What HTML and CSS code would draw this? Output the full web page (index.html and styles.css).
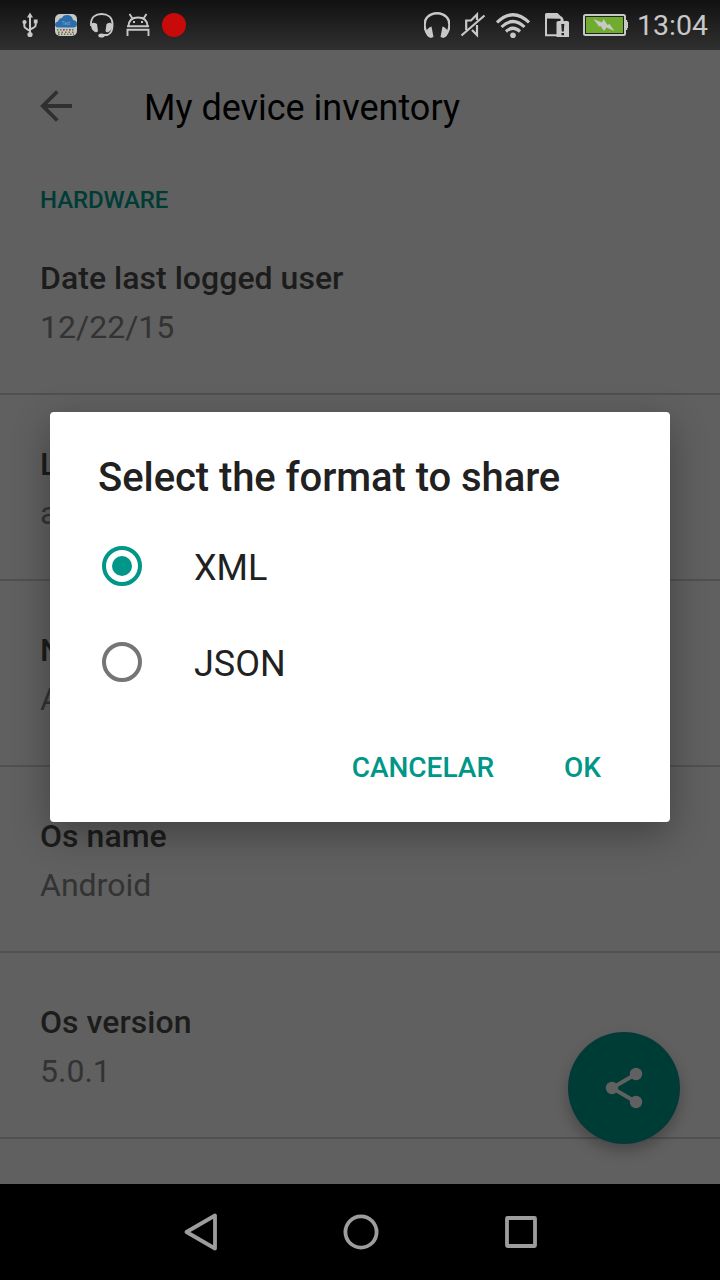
FILE: index.html
```html
<!DOCTYPE html>
<html lang="en">
<head>
<meta charset="utf-8">
<title>My device inventory</title>
<link rel="stylesheet" href="styles.css">
</head>
<body>
<div class="screen">
  <header class="status">
    <div class="status-left">
      <svg width="18" height="26" viewBox="21 12 18 26" fill="none" stroke="#c8c8c8" stroke-width="2"><path d="M30 16V35M24.300 23v3q0 2 2 2.600L30 31M35.700 22v3q0 2-2 2.600L30 29.500"/><path d="M30 12.500l3 5h-6z" fill="#c8c8c8" stroke="none"/><circle cx="30" cy="34.500" r="2.600" fill="#c8c8c8" stroke="none"/><circle cx="24.500" cy="22" r="2.100" fill="#c8c8c8" stroke="none"/><path d="M33.800 19.500h3.800v3.800h-3.800z" fill="#c8c8c8" stroke="none"/></svg>
      <svg class="gap-app" width="22" height="22" viewBox="0 0 22 22"><rect width="22" height="22" rx="5" fill="#c8c8c2"/><path d="M3 13.500Q0 13 0 10.500 0 8 3 7.500 4 4 7 4 8 1 12 1q5 0 6 5 4 .5 4 4 0 3-3 3.500z" fill="#2b6cab"/><text x="11" y="10.500" text-anchor="middle" font-size="4.500" fill="#7ba5cb">Test</text><g fill="none" stroke-width="1.600"><path d="M2 15.800h18" stroke="#3d8a4b" stroke-dasharray="1.500 1.500"/><path d="M3 18.200h17" stroke="#bd4248" stroke-dasharray="1.500 2"/><path d="M3 20.300h16" stroke="#45864c" stroke-dasharray="1.500 1.500"/><path d="M8 15.800h9" stroke="#b9353f" stroke-dasharray="1.500 4.500"/></g></svg>
      <svg class="gap-headset" width="24" height="26" viewBox="90 12 24 26"><path d="M91 26v-2C91 17 95.500 14 101.500 14S112.500 17 112.500 24v2q0 7-5 9H102" fill="none" stroke="#c8c8c8" stroke-width="1.800"/><path d="M91 25q1-3 4-2l2 1 1 7q-1 2-3 1-4-2-4-7zM112.500 25q-1-3-4-2l-2 1-1 7q1 2 3 1 4-2 4-7z" fill="#c8c8c8"/><ellipse cx="101.500" cy="35.500" rx="3.200" ry="2" fill="#c8c8c8"/></svg>
      <svg class="gap-droid" width="24" height="26" viewBox="126 12 24 26" fill="none" stroke="#c8c8c8" stroke-width="1.900"><path d="M127 26.200h22M128.500 26Q129 17.500 138 17.500T147.500 26M132.500 18.500L129.500 14M143.500 18.500l3-4.500M127.500 36v-6.200h21V36"/><path d="M133 21h2v2h-2zM141 21h2v2h-2z" fill="#c8c8c8" stroke="none"/></svg>
      <span class="record"></span>
    </div>
    <div class="status-right">
      <svg width="26" height="26" viewBox="424 12 26 26"><path d="M429 36C423 29 424 21 427 17.500q4-4.200 10-4.200t10 4.200C450 21 451 29 445 36" fill="none" stroke="#c8c8c8" stroke-width="2.400"/><path d="M431.500 26.500l2 10.500-3 1q-5-2-4-7 1-3 5-4.500zM442.500 26.500l-2 10.500 3 1q5-2 4-7-1-3-5-4.500z" fill="#c8c8c8"/></svg>
      <svg class="gap-mute" width="25" height="26" viewBox="461 12 25 26" fill="none" stroke="#c8c8c8" stroke-width="2.200"><path d="M466.200 30v-9.500h4.800L477 14.500V20M477 25v10l-5-5M461.500 35.500l23-20"/></svg>
      <svg class="gap-wifi" width="34" height="26" viewBox="496 12 34 26" fill="none" stroke="#c8c8c8" stroke-width="3.100"><path d="M497 22.500q16-15.500 32 0M501.500 27q11.500-11 23 0M506 31.500q7-6.500 14 0"/><circle cx="513" cy="35.200" r="2.800" fill="#c8c8c8" stroke="none"/></svg>
      <svg class="gap-sim" width="25" height="26" viewBox="544 12 25 26"><path d="M557 35.200H546V17.500h15l1 1v3" fill="none" stroke="#c8c8c8" stroke-width="2"/><path d="M545 18v-3.500q0-1.500 1.500-1.500h11l6 6V22h-3v-3.500z" fill="#c8c8c8"/><path d="M556.500 22l1.500-1h9.500l1.500 1v15h-12.500z" fill="#c8c8c8"/><path d="M561.300 24h3l-.5 7.500h-2zM561.500 33h2.500v2.300h-2.500z" fill="#222"/></svg>
      <svg class="gap-battery" width="45" height="22" viewBox="583 14 45 22"><rect x="584" y="15" width="41" height="20" rx="1.500" fill="#222" stroke="#c8c8c8" stroke-width="2"/><path d="M626 20h1.200v2h.8v6h-.8v2H626z" fill="#c8c8c8"/><path d="M586 17h37v16h-37z" fill="#70ac2d"/><path d="M593.500 19l8.500 3.500 1.500-3.500 4 6 2-1 5 7-8-3.500-2.500 3.500-3.500-5-1.500.5z" fill="#c8c8c8"/></svg>
      <span class="clock">13:04</span>
    </div>
  </header>

  <main class="page">
    <div class="toolbar">
      <svg width="32" height="32" viewBox="0 0 32 32" fill="none" stroke="#303030" stroke-width="3.800"><path d="M32 16H3M17.300 1.500L2.800 16l14.500 14.500"/></svg>
      <h1 class="title">My device inventory</h1>
    </div>
    <h2 class="category">HARDWARE</h2>
    <section class="row"><h3 class="name">Date last logged user</h3><p class="value">12/22/15</p></section>
    <section class="row"><h3 class="name">L</h3><p class="value">a</p></section>
    <section class="row"><h3 class="name">N</h3><p class="value">A</p></section>
    <section class="row"><h3 class="name">Os name</h3><p class="value">Android</p></section>
    <section class="row"><h3 class="name">Os version</h3><p class="value">5.0.1</p></section>
    <button class="fab" aria-label="Share"><svg width="38" height="42" viewBox="0 0 38 42" fill="#616161" stroke="#616161"><path d="M31 7L7 21l24 14" fill="none" stroke-width="3.800"/><g stroke="none"><circle cx="7" cy="21" r="6.200"/><circle cx="31" cy="7" r="6.200"/><circle cx="31" cy="35" r="6.200"/></g></svg></button>
  </main>

  <nav class="nav">
    <svg width="36" height="40" viewBox="0 0 36 40"><path d="M32 3.500v33L3.500 20z"/></svg>
    <svg width="40" height="40" viewBox="0 0 40 40"><circle cx="20" cy="20" r="15.600"/></svg>
    <svg width="36" height="40" viewBox="0 0 36 40"><rect x="4" y="6" width="28" height="28" rx=".5"/></svg>
  </nav>

  <div class="dialog" role="dialog">
    <h2 class="dialog-title">Select the format to share</h2>
    <div class="option"><span class="radio selected"></span><span>XML</span></div>
    <div class="option"><span class="radio"></span><span>JSON</span></div>
    <div class="actions"><span>CANCELAR</span><span>OK</span></div>
  </div>
</div>
</body>
</html>
```

FILE: styles.css
```css
* { box-sizing: border-box; }
body, h1, h2, h3, p { margin: 0; }
body { background: #000; }
svg { display: block; flex: none; }
.screen {
  position: relative;
  width: 720px;
  height: 1280px;
  overflow: hidden;
  display: flex;
  flex-direction: column;
  background: #606060;
  font-family: Roboto, sans-serif;
}
.status {
  height: 50px;
  flex: none;
  display: flex;
  justify-content: space-between;
  padding: 0 12px 0 21px;
  background: linear-gradient(#111, #303030);
}
.status-left, .status-right { display: flex; align-items: center; }
.gap-app { margin-left: 16px; }
.gap-headset { margin-left: 13px; }
.gap-droid { margin-left: 12px; }
.record {
  width: 24px;
  height: 24px;
  margin-left: 12px;
  border-radius: 50%;
  background: #c80a0a;
}
.gap-mute { margin-left: 11px; }
.gap-wifi { margin-left: 10px; }
.gap-sim { margin-left: 14px; }
.gap-battery { margin-left: 14px; }
.clock {
  width: 71px;
  margin-left: 9px;
  padding-top: 2px;
  font-size: 28.500px;
  line-height: 36px;
  color: #c8c8c8;
}
.page { position: relative; height: 1134px; flex: none; }
.toolbar {
  height: 112px;
  display: flex;
  align-items: center;
  gap: 72px;
  padding-left: 40px;
}
.title { font-size: 36px; line-height: 42px; font-weight: 400; color: #000; padding-top: 3px; }
.category {
  height: 47px;
  padding: 24px 40px 0;
  font-size: 24px;
  line-height: 28px;
  font-weight: 500;
  letter-spacing: -.1px;
  color: #003c36;
}
.row {
  height: 186px;
  padding: 50px 40px 0;
  border-bottom: 2px solid #505050;
}
.name { font-size: 32px; line-height: 38px; font-weight: 500; letter-spacing: .03px; color: #1c1c1c; }
.value { margin-top: 11px; font-size: 32px; line-height: 38px; color: #333; }
.fab {
  position: absolute;
  right: 40px;
  bottom: 40px;
  width: 112px;
  height: 112px;
  padding: 0;
  border: 0;
  border-radius: 50%;
  display: grid;
  place-items: center;
  background: #003c36;
  box-shadow: 0 7px 14px rgba(0, 0, 0, .26);
}
.nav {
  height: 96px;
  flex: none;
  display: flex;
  align-items: center;
  gap: 122px;
  padding-left: 183px;
  background: #000;
}
.nav svg { fill: none; stroke: #9d9d9d; stroke-width: 3.8; stroke-linejoin: round; }
.dialog {
  position: absolute;
  left: 50px;
  top: 412px;
  width: 620px;
  height: 410px;
  padding: 42px 48px 0;
  border-radius: 4px;
  background: #fff;
  color: #212121;
  box-shadow: 0 12px 38px rgba(0, 0, 0, .32);
}
.dialog-title { font-size: 40px; line-height: 48px; font-weight: 500; letter-spacing: -.07px; white-space: nowrap; }
.option {
  height: 96px;
  margin: 0 4px;
  display: flex;
  align-items: center;
  gap: 52px;
  font-size: 36px;
  line-height: 42px;
}
.dialog-title + .option { margin-top: 16px; }
.option span:last-child { padding-top: 3px; }
.radio {
  width: 40px;
  height: 40px;
  border: 4px solid #757575;
  border-radius: 50%;
  display: grid;
  place-items: center;
}
.selected { border-color: #009688; }
.selected::after {
  content: "";
  width: 20px;
  height: 20px;
  border-radius: 50%;
  background: #009688;
}
.actions {
  display: flex;
  justify-content: flex-end;
  gap: 70px;
  padding: 41px 21px 0 0;
  font-size: 28px;
  line-height: 34px;
  font-weight: 500;
  color: #009688;
}
```
